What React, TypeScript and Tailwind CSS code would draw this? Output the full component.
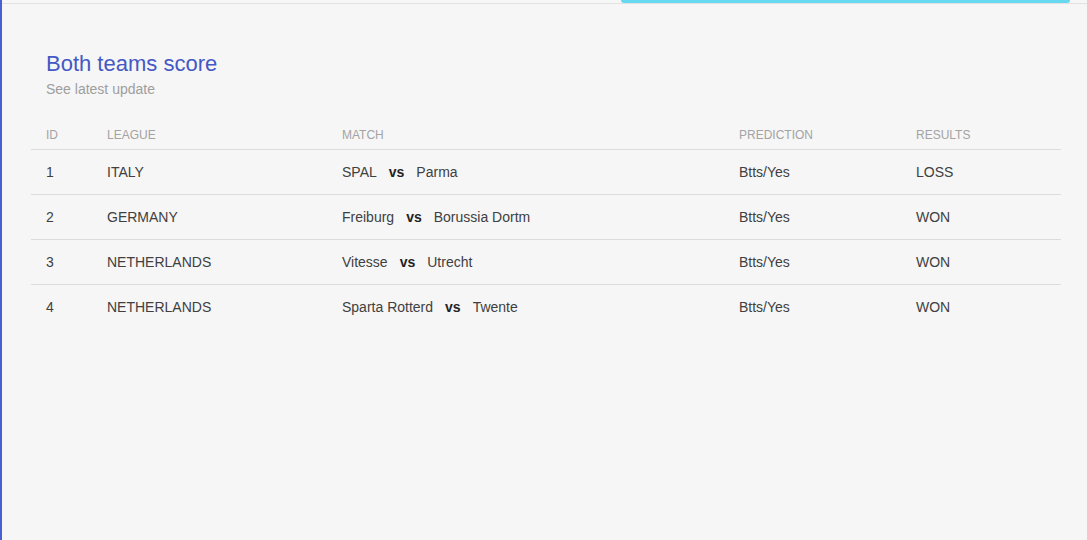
const rows = [
  { id: 1, league: 'ITALY', home: 'SPAL', away: 'Parma', prediction: 'Btts/Yes', result: 'LOSS' },
  { id: 2, league: 'GERMANY', home: 'Freiburg', away: 'Borussia Dortm', prediction: 'Btts/Yes', result: 'WON' },
  { id: 3, league: 'NETHERLANDS', home: 'Vitesse', away: 'Utrecht', prediction: 'Btts/Yes', result: 'WON' },
  { id: 4, league: 'NETHERLANDS', home: 'Sparta Rotterd', away: 'Twente', prediction: 'Btts/Yes', result: 'WON' },
]

export default function App() {
  return (
    <div
      className="h-[540px] w-full bg-[#f6f6f6] border-l-2 border-[#4a5fd0] overflow-hidden"
      style={{ fontFamily: '"Liberation Sans", Arial, sans-serif' }}
    >
      {/* Tab strip */}
      <div className="flex h-[4px] border-b border-[#e2e2e2]">
        <div className="w-[619px]" />
        <div className="w-[449px] h-[3px] bg-[#66d9f0] rounded-b-[3px]" />
      </div>

      <div className="pl-[29px] pr-[26px] pt-[45px]">
        <div className="pl-[15px]">
          <h2 className="text-[22px] leading-[30px] text-[#4459c4]">Both teams score</h2>
          <p className="text-[14px] leading-[18px] text-[#9e9e9e] mt-[1px]">See latest update</p>
        </div>

        <table className="w-full mt-[22px] border-collapse table-fixed text-left">
          <colgroup>
            <col className="w-[61px]" />
            <col className="w-[235px]" />
            <col className="w-[397px]" />
            <col className="w-[177px]" />
            <col />
          </colgroup>
          <thead>
            <tr className="h-[29px] border-b border-[#dcdcdc] text-[12px] text-[#a3a3a3]">
              <th className="pl-[15px] pt-[2px] font-normal">ID</th>
              <th className="pl-[15px] pt-[2px] font-normal">LEAGUE</th>
              <th className="pl-[15px] pt-[2px] font-normal">MATCH</th>
              <th className="pl-[15px] pt-[2px] font-normal">PREDICTION</th>
              <th className="pl-[15px] pt-[2px] font-normal">RESULTS</th>
            </tr>
          </thead>
          <tbody className="text-[14px] text-[#404040]">
            {rows.map((r, i) => (
              <tr
                key={r.id}
                className={`h-[45px] ${i < rows.length - 1 ? 'border-b border-[#dcdcdc]' : ''}`}
              >
                <td className="pl-[15px] pt-[2px]">{r.id}</td>
                <td className="pl-[15px] pt-[2px]">{r.league}</td>
                <td className="pl-[15px] pt-[2px]">
                  {r.home}
                  <b className="mx-[12px] font-bold text-[#222]">vs</b>
                  {r.away}
                </td>
                <td className="pl-[15px] pt-[2px]">{r.prediction}</td>
                <td className="pl-[15px] pt-[2px]">{r.result}</td>
              </tr>
            ))}
          </tbody>
        </table>
      </div>
    </div>
  )
}
